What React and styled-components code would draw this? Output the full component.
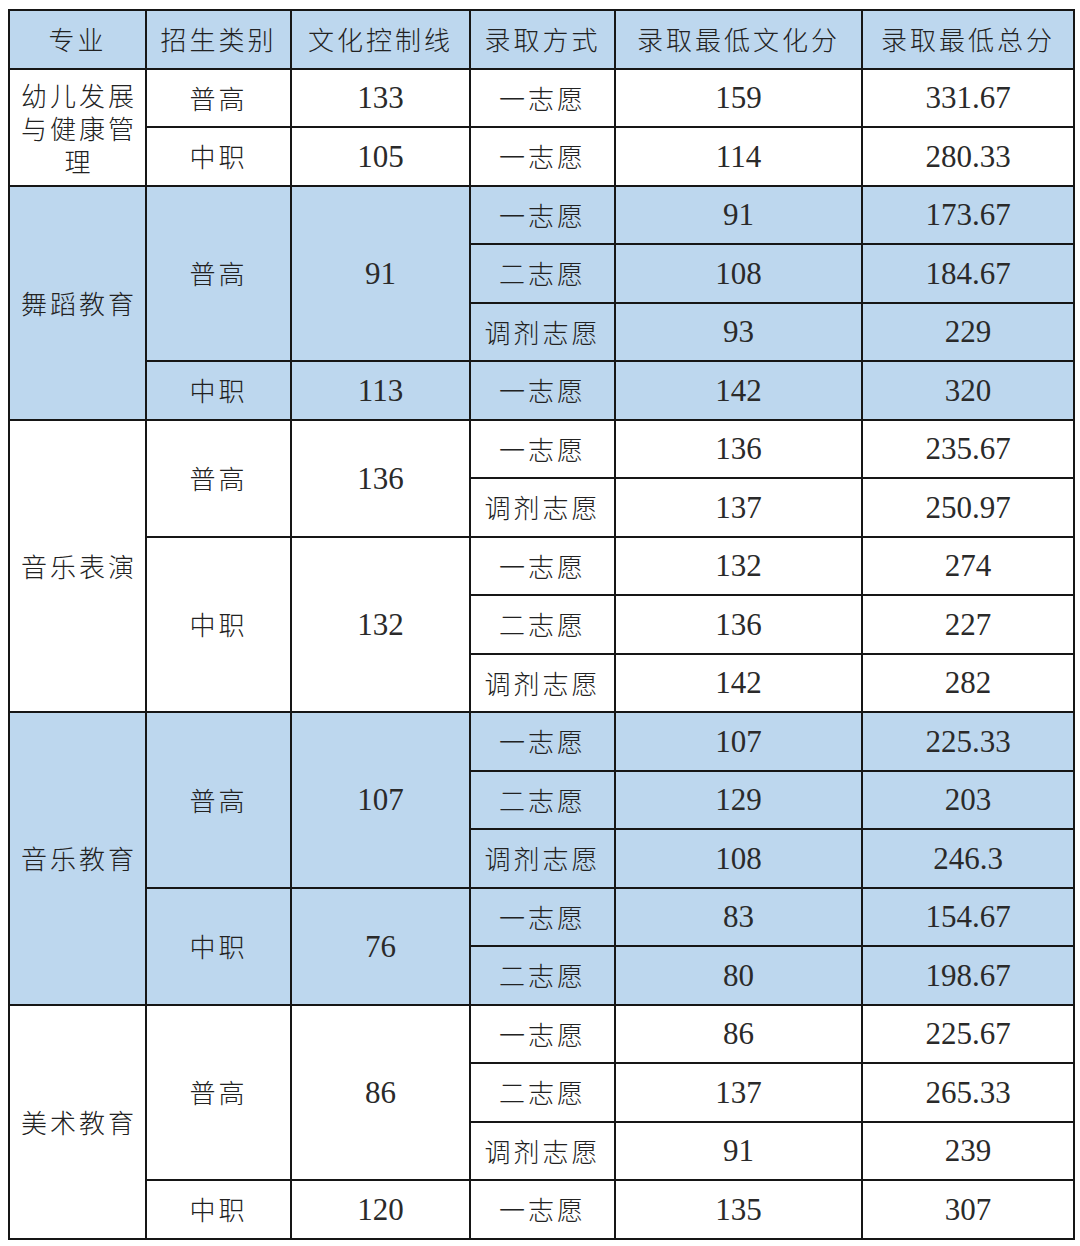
import React from 'react';
import styled, { createGlobalStyle } from 'styled-components';

const GlobalStyle = createGlobalStyle`
  body {
    margin: 0;
    background: #ffffff;
  }
`;

const Page = styled.div`
  padding: 9px 7px 8px 8px;
  background: #ffffff;
`;

const Table = styled.table`
  width: 1065px;
  border-collapse: collapse;
  table-layout: fixed;
  color: #222222;
  border: 2px solid #161616;
`;

const Cell = styled.td`
  height: 56.5px;
  padding: 0;
  border: 2px solid #161616;
  text-align: center;
  vertical-align: middle;
  background: ${(p) => (p.$blue ? '#bdd7ee' : '#ffffff')};
  color: ${(p) => (p.$num ? '#2a2a2a' : '#222222')};
  font-size: ${(p) => (p.$num ? '31px' : '26px')};
  letter-spacing: ${(p) => (p.$num ? '0' : '3px')};
  line-height: ${(p) => (p.$wrap ? '33px' : '1')};
  font-family: ${(p) =>
    p.$num ? '"Liberation Serif", serif' : '"Noto Sans CJK SC", sans-serif'};
  font-weight: ${(p) => (p.$num ? 400 : 300)};
`;

const Head = styled(Cell).attrs({ as: 'th' })`
  background: #bdd7ee;
`;

const Major = styled.span`
  display: inline-block;
  width: 120px;
  padding-left: 3px;
`;

const cols = [137, 145, 179, 145, 247, 212];

const groups = [
  {
    major: '幼儿发展与健康管理',
    blue: false,
    rows: [
      { type: '普高', line: '133', items: [['一志愿', '159', '331.67']] },
      { type: '中职', line: '105', items: [['一志愿', '114', '280.33']] },
    ],
  },
  {
    major: '舞蹈教育',
    blue: true,
    rows: [
      {
        type: '普高',
        line: '91',
        items: [
          ['一志愿', '91', '173.67'],
          ['二志愿', '108', '184.67'],
          ['调剂志愿', '93', '229'],
        ],
      },
      { type: '中职', line: '113', items: [['一志愿', '142', '320']] },
    ],
  },
  {
    major: '音乐表演',
    blue: false,
    rows: [
      {
        type: '普高',
        line: '136',
        items: [
          ['一志愿', '136', '235.67'],
          ['调剂志愿', '137', '250.97'],
        ],
      },
      {
        type: '中职',
        line: '132',
        items: [
          ['一志愿', '132', '274'],
          ['二志愿', '136', '227'],
          ['调剂志愿', '142', '282'],
        ],
      },
    ],
  },
  {
    major: '音乐教育',
    blue: true,
    rows: [
      {
        type: '普高',
        line: '107',
        items: [
          ['一志愿', '107', '225.33'],
          ['二志愿', '129', '203'],
          ['调剂志愿', '108', '246.3'],
        ],
      },
      {
        type: '中职',
        line: '76',
        items: [
          ['一志愿', '83', '154.67'],
          ['二志愿', '80', '198.67'],
        ],
      },
    ],
  },
  {
    major: '美术教育',
    blue: false,
    rows: [
      {
        type: '普高',
        line: '86',
        items: [
          ['一志愿', '86', '225.67'],
          ['二志愿', '137', '265.33'],
          ['调剂志愿', '91', '239'],
        ],
      },
      { type: '中职', line: '120', items: [['一志愿', '135', '307']] },
    ],
  },
];

const headers = ['专业', '招生类别', '文化控制线', '录取方式', '录取最低文化分', '录取最低总分'];

const App = () => {
  const body = [];
  groups.forEach((g, gi) => {
    const total = g.rows.reduce((n, r) => n + r.items.length, 0);
    g.rows.forEach((r, ri) => {
      r.items.forEach((it, ii) => {
        body.push(
          <tr key={`${gi}-${ri}-${ii}`}>
            {ri === 0 && ii === 0 && (
              <Cell rowSpan={total} $blue={g.blue} $wrap={g.major.length > 4}>
                <Major>{g.major}</Major>
              </Cell>
            )}
            {ii === 0 && (
              <>
                <Cell rowSpan={r.items.length} $blue={g.blue}>{r.type}</Cell>
                <Cell rowSpan={r.items.length} $blue={g.blue} $num>{r.line}</Cell>
              </>
            )}
            <Cell $blue={g.blue}>{it[0]}</Cell>
            <Cell $blue={g.blue} $num>{it[1]}</Cell>
            <Cell $blue={g.blue} $num>{it[2]}</Cell>
          </tr>
        );
      });
    });
  });

  return (
    <Page>
      <GlobalStyle />
      <Table>
        <colgroup>
          {cols.map((w, i) => (
            <col key={i} style={{ width: w }} />
          ))}
        </colgroup>
        <thead>
          <tr>
            {headers.map((h) => (
              <Head key={h}>{h}</Head>
            ))}
          </tr>
        </thead>
        <tbody>{body}</tbody>
      </Table>
    </Page>
  );
};

export default App;
